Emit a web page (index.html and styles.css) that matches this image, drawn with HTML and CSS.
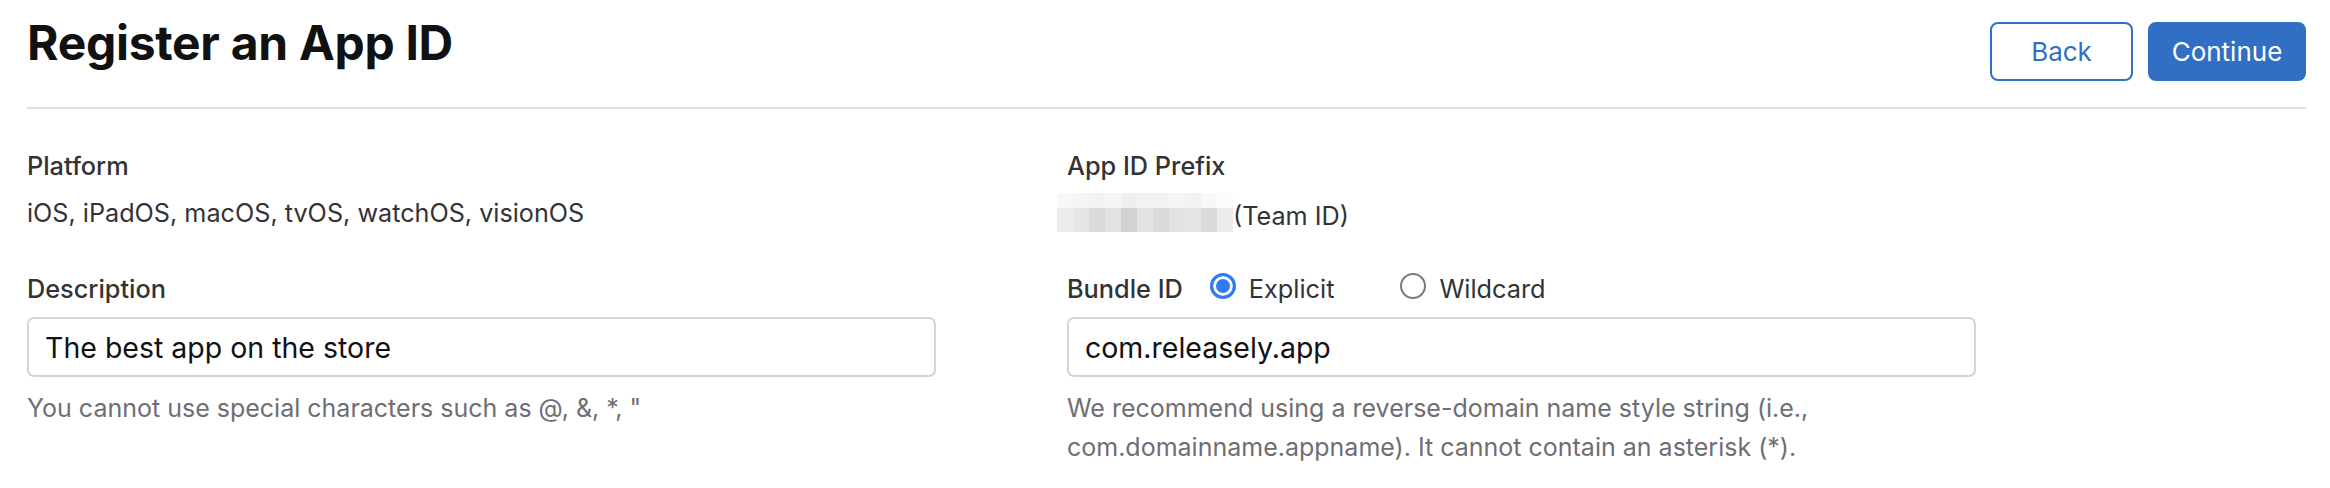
FILE: index.html
```html
<!DOCTYPE html>
<html lang="en">
<head>
<meta charset="utf-8">
<title>Register an App ID</title>
<link rel="stylesheet" href="styles.css">
</head>
<body>
<div class="page">
  <header class="header">
    <h1 class="title">Register an App ID</h1>
    <div class="actions">
      <button class="btn btn-secondary" type="button">Back</button>
      <button class="btn btn-primary" type="button">Continue</button>
    </div>
  </header>

  <main class="form">
    <div class="label row-label-1">Platform</div>
    <div class="label row-label-1">App ID Prefix</div>

    <div class="value row-value">iOS, iPadOS, macOS, tvOS, watchOS, visionOS</div>
    <div class="prefix row-value">
      <div class="blur">
        <span class="px t1"></span><span class="px t2"></span><span class="px t3"></span><span class="px t2"></span><span class="px t4"></span><span class="px t3"></span><span class="px t3"></span><span class="px t2"></span><span class="px t3"></span><span class="px t1"></span><span class="px t0"></span>
        <span class="px b1"></span><span class="px b2"></span><span class="px b4"></span><span class="px b3"></span><span class="px b5"></span><span class="px b3"></span><span class="px b4"></span><span class="px b3"></span><span class="px b2"></span><span class="px b4"></span><span class="px b1"></span>
      </div>
      <span class="prefix-text">(Team ID)</span>
    </div>

    <div class="label row-label-2">Description</div>
    <div class="bundle row-label-2">
      <span class="label">Bundle ID</span>
      <label class="radio">
        <span class="radio-dot checked"></span>
        <span class="radio-text">Explicit</span>
      </label>
      <label class="radio radio-wild">
        <span class="radio-dot"></span>
        <span class="radio-text">Wildcard</span>
      </label>
    </div>

    <div class="field row-input"><input class="input" type="text" value="The best app on the store"></div>
    <div class="field row-input"><input class="input" type="text" value="com.releasely.app"></div>

    <p class="hint">You cannot use special characters such as @, &amp;, *, "</p>
    <p class="hint">We recommend using a reverse-domain name style string (i.e., com.domainname.appname). It cannot contain an asterisk (*).</p>
  </main>
</div>
</body>
</html>
```

FILE: styles.css
```css
* { box-sizing: border-box; }

html, body {
  margin: 0;
  padding: 0;
  background: #ffffff;
}

body {
  font-family: Inter, "Noto Sans", "Liberation Sans", sans-serif;
  color: #333336;
}

.page {
  padding: 0 24px 0 27px;
}

.header {
  display: flex;
  justify-content: space-between;
  align-items: flex-start;
  padding: 14px 0 26px;
  border-bottom: 2px solid #dedede;
}

.title {
  margin: 0;
  font-size: 48px;
  line-height: 58px;
  font-weight: 700;
  color: #111112;
  letter-spacing: -0.3px;
}

.actions {
  display: flex;
  gap: 15px;
  margin-top: 8px;
}

.btn {
  height: 59px;
  border-radius: 8px;
  font-family: inherit;
  font-size: 26px;
  font-weight: 400;
  padding: 0;
  cursor: pointer;
}

.btn-secondary {
  width: 143px;
  background: #ffffff;
  color: #316fc4;
  border: 2px solid #316fc4;
}

.btn-primary {
  width: 158px;
  background: #316fc4;
  color: #ffffff;
  border: 2px solid #316fc4;
}

.form {
  display: grid;
  grid-template-columns: 1040px 1040px;
  padding-top: 41px;
}

.label {
  font-size: 25.3px;
  line-height: 32px;
  font-weight: 500;
  color: #333336;
}

.value {
  font-size: 25.2px;
  line-height: 32px;
  color: #333336;
}

.row-value { margin-top: 15px; height: 32px; }
.row-label-2 { margin-top: 44px; }
.row-input { margin-top: 12px; }

.prefix {
  display: flex;
  align-items: flex-start;
}

.blur {
  display: grid;
  grid-template-columns: repeat(11, 16px);
  grid-template-rows: 15px 24px;
  margin: -4px 0 0 -10px;
}

.px { display: block; }
.t0 { background: #fbfbfb; }
.t1 { background: #f8f8f8; }
.t2 { background: #f5f5f5; }
.t3 { background: #f2f2f2; }
.t4 { background: #efefef; }
.b1 { background: #ebebeb; }
.b2 { background: #e6e6e6; }
.b3 { background: #e2e2e2; }
.b4 { background: #dadada; }
.b5 { background: #d2d2d2; }

.prefix-text {
  font-size: 25.2px;
  line-height: 32px;
  padding-top: 3px;
  color: #333336;
}

.bundle {
  display: flex;
  align-items: flex-start;
}

.radio {
  display: flex;
  align-items: flex-start;
  margin-left: 27px;
}

.radio-wild { margin-left: 66px; }

.radio-dot {
  width: 26px;
  height: 26px;
  border-radius: 50%;
  border: 2px solid #7a7a7a;
  background: #ffffff;
  flex: none;
}

.radio-dot.checked {
  border: 3px solid #2f7bf5;
  background: #2f7bf5;
  box-shadow: inset 0 0 0 3px #ffffff;
}

.radio-text {
  margin-left: 13px;
  font-size: 25.3px;
  line-height: 32px;
  color: #333336;
}

.input {
  display: block;
  width: 909px;
  height: 60px;
  border: 2px solid #d4d4d4;
  border-radius: 7px;
  padding: 0 16px;
  font-family: inherit;
  font-size: 28.5px;
  color: #111112;
  background: #ffffff;
  outline: none;
}

.hint {
  margin: 12px 0 0;
  max-width: 909px;
  font-size: 25px;
  line-height: 39px;
  color: #6e6e73;
}
```
